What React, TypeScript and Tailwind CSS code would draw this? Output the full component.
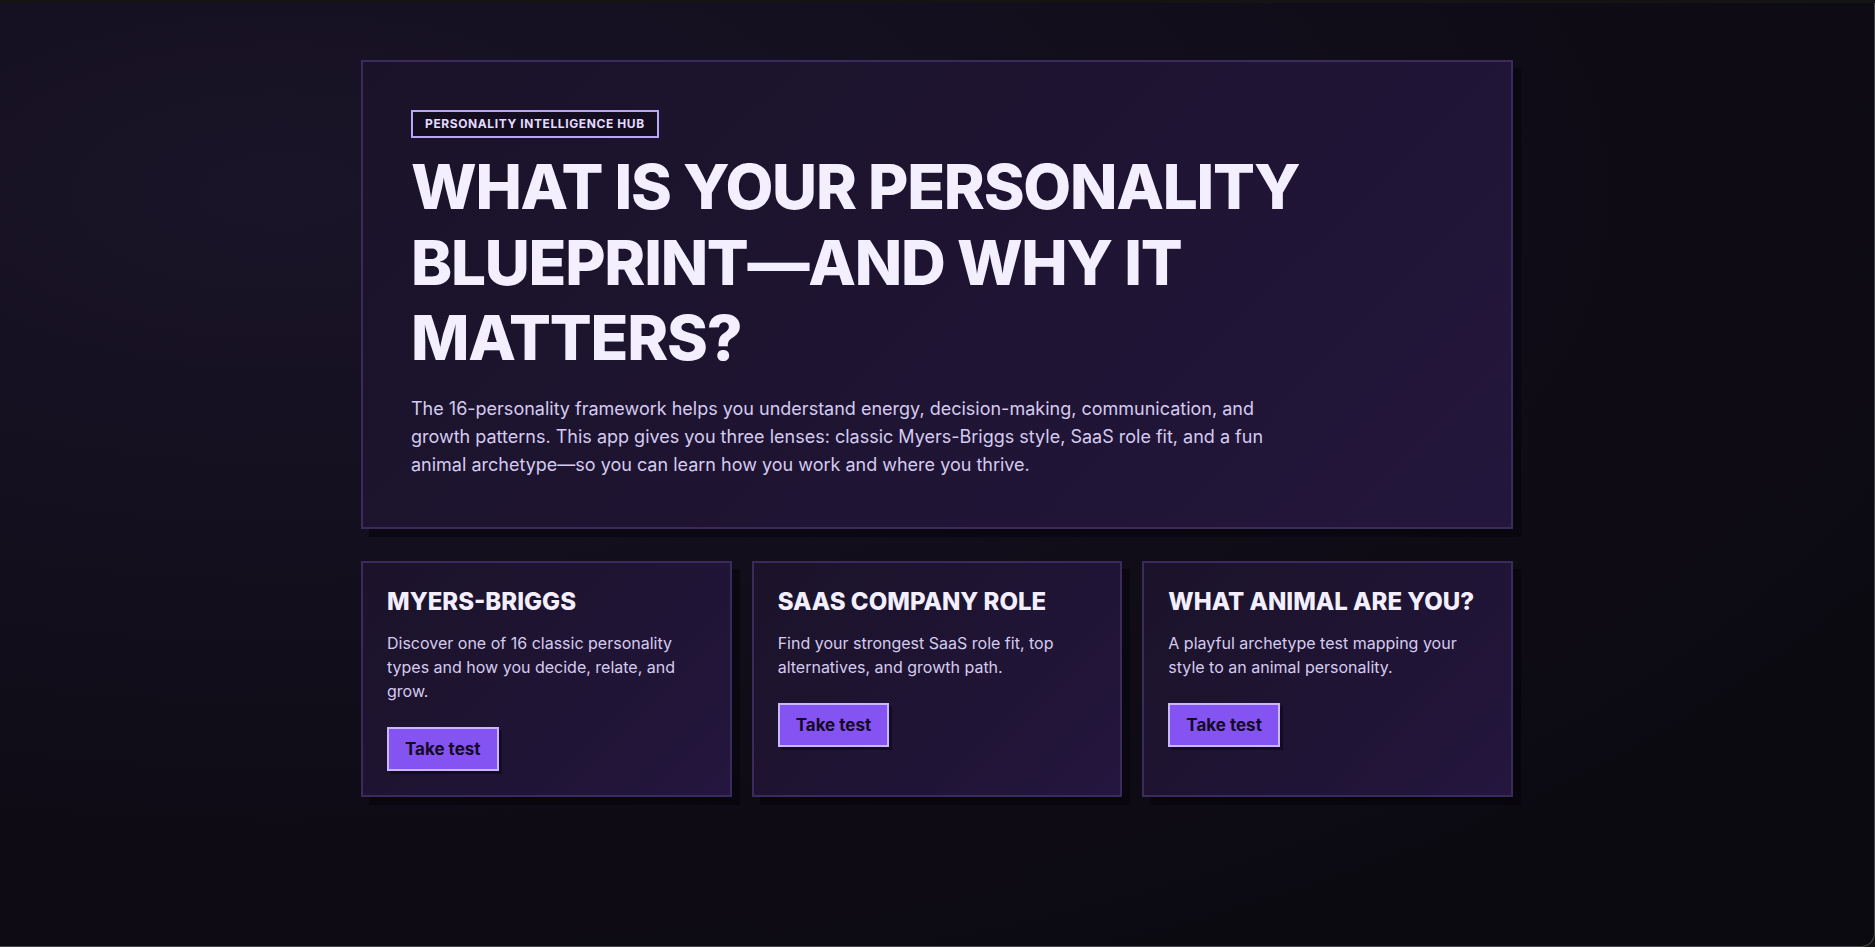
import React from 'react';

interface TestCard {
  title: string;
  blurb: string;
}

const tests: TestCard[] = [
  {
    title: 'Myers-Briggs',
    blurb: 'Discover one of 16 classic personality types and how you decide, relate, and grow.',
  },
  {
    title: 'SaaS Company Role',
    blurb: 'Find your strongest SaaS role fit, top alternatives, and growth path.',
  },
  {
    title: 'What Animal Are You?',
    blurb: 'A playful archetype test mapping your style to an animal personality.',
  },
];

const App: React.FC = () => {
  return (
    <div className="h-[947px] w-full overflow-hidden bg-[#141414] font-['Inter',sans-serif]">
      <div className="h-[944px] mt-[3px] overflow-hidden rounded-br-[14px] border-r border-b border-[#46464a] bg-[radial-gradient(ellipse_at_15%_20%,#1a1428_0%,#110d1a_45%,#0c0a11_80%)]">
        <main className="mx-auto max-w-[1152px] pt-[57px]">
          {/* Hero */}
          <section className="border-2 border-[#3a2b5c] bg-[linear-gradient(135deg,#1a1328_0%,#1e1432_50%,#23163c_100%)] p-12 shadow-[8px_8px_0_0_rgba(6,4,10,0.55)]">
            <span className="inline-block border-2 border-[#b9a6f7] bg-[#130d1f] px-3 py-1 text-xs font-bold uppercase tracking-[0.05em] text-[#e4dcff]">
              Personality Intelligence Hub
            </span>
            <h1 className="mt-[11px] max-w-[920px] text-[62px] font-extrabold uppercase leading-[1.22] tracking-[-0.02em] text-[#f3efff]">
              What is your personality blueprint—and why it matters?
            </h1>
            <p className="mt-[19px] max-w-4xl text-lg leading-7 text-[#d5cbef]">
              The 16-personality framework helps you understand energy, decision-making, communication, and growth
              patterns. This app gives you three lenses: classic Myers-Briggs style, SaaS role fit, and a fun animal
              archetype—so you can learn how you work and where you thrive.
            </p>
          </section>

          {/* Test cards */}
          <div className="mt-8 grid grid-cols-3 gap-5">
            {tests.map((t) => (
              <article
                key={t.title}
                className="border-2 border-[#3a2b5c] bg-[linear-gradient(135deg,#1b1329_0%,#1f1434_55%,#24163e_100%)] p-6 shadow-[8px_8px_0_0_rgba(6,4,10,0.55)]"
              >
                <h2 className="text-2xl font-extrabold uppercase leading-tight text-[#f3efff]">{t.title}</h2>
                <p className="mt-3.5 text-base leading-6 text-[#d5cbef]">{t.blurb}</p>
                <button className="mt-6 border-2 border-[#c9b8ff] bg-[#8453f2] px-[16px] py-2 text-[17px] font-bold leading-6 text-[#140a24] shadow-[3px_3px_0_0_rgba(6,4,10,0.45)]">
                  Take test
                </button>
              </article>
            ))}
          </div>
        </main>
      </div>
    </div>
  );
};

export default App;
